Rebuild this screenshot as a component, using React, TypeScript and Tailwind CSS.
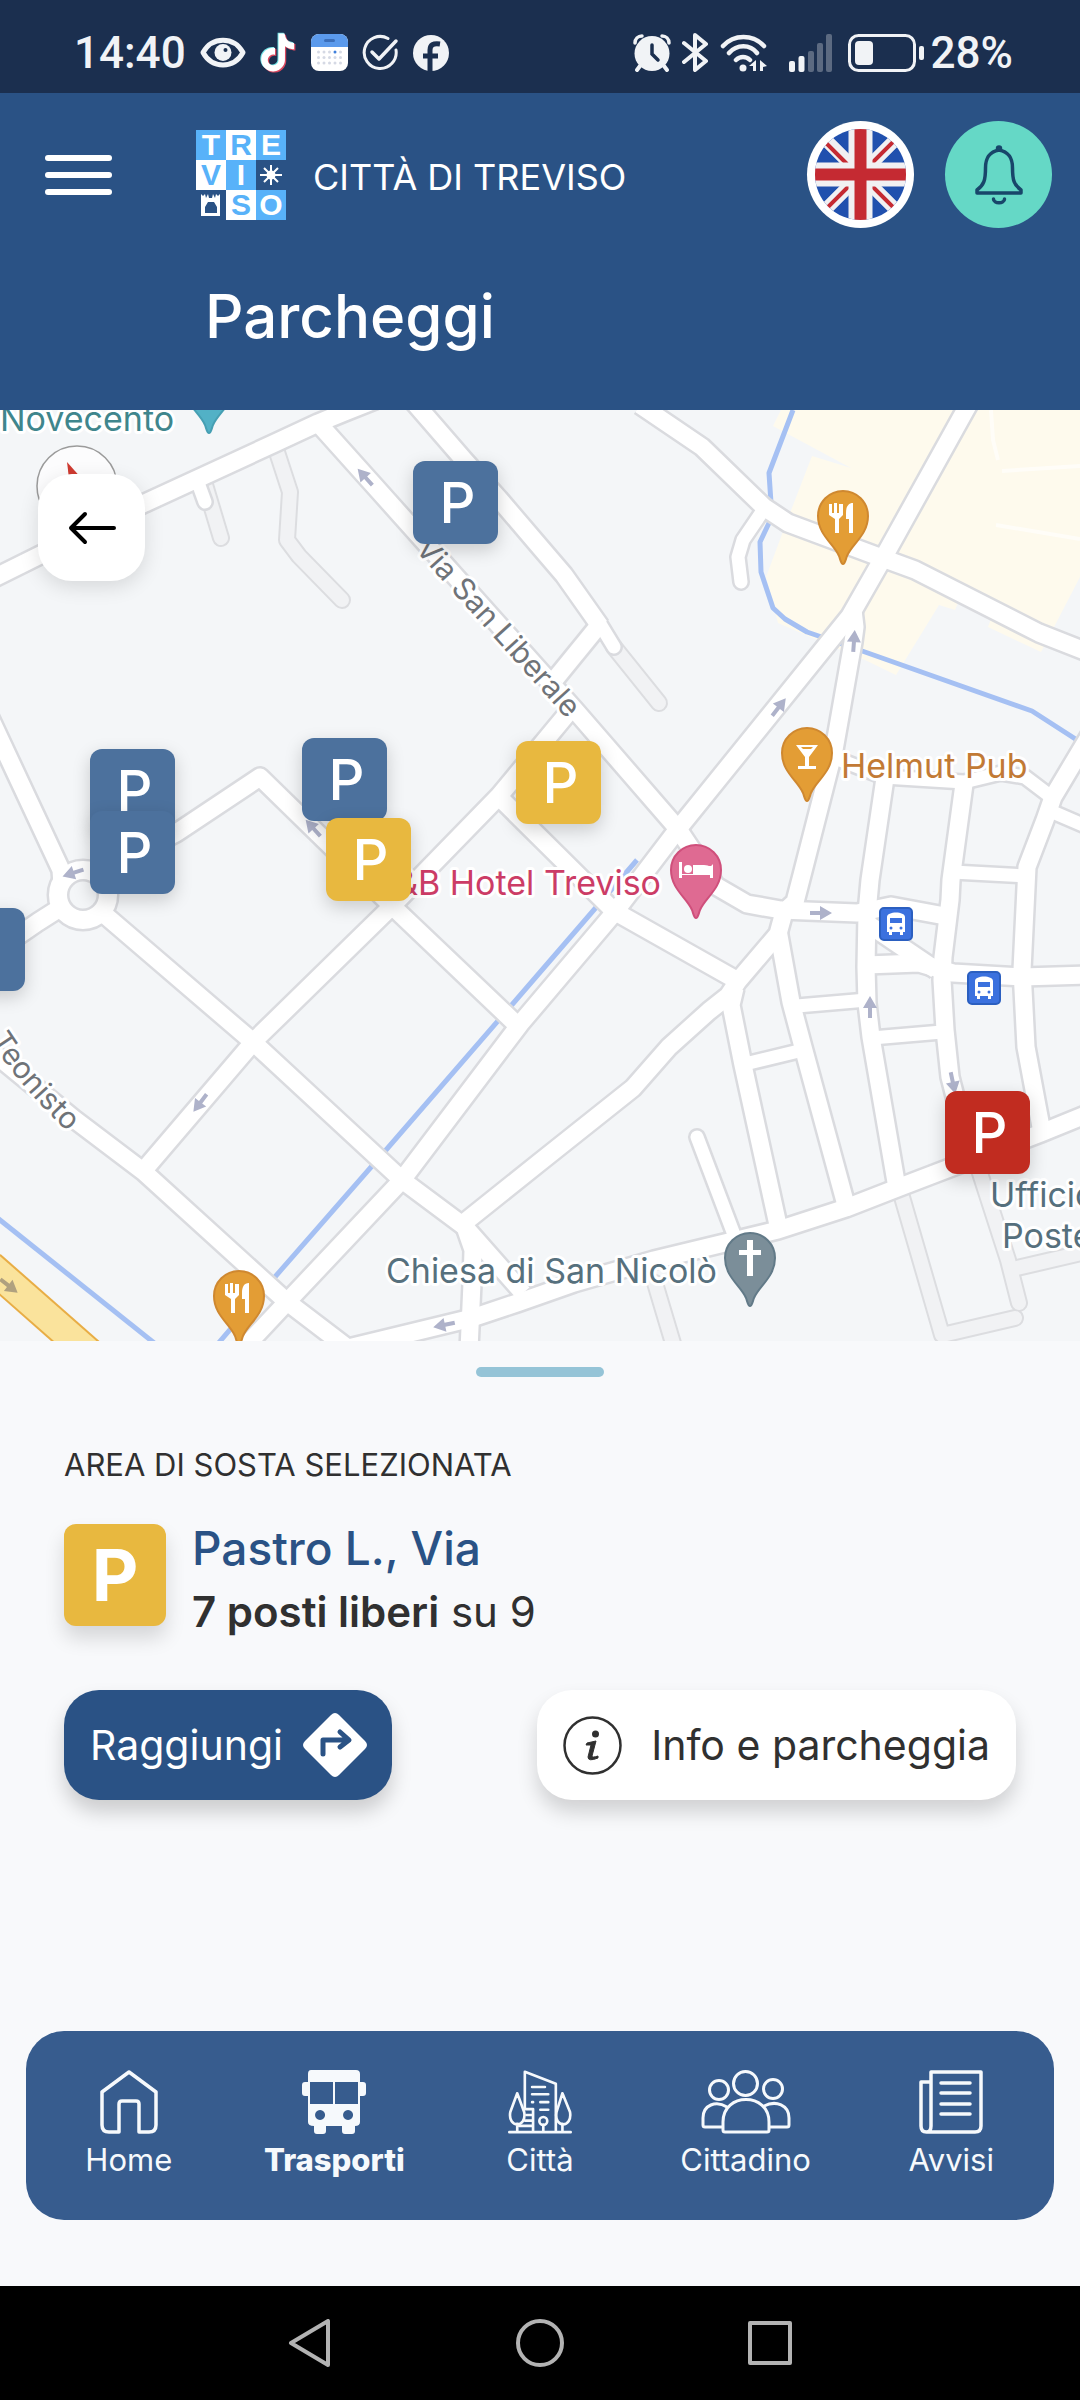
import React from 'react';

const MAP_W = 1080;
const MAP_H = 931;

const wideRoads = [
  'M-10 170 L145 93 L275 33 L318 13 L345 2 L375 -10',
  'M318 13 L379 81 L574 299 L678 419 L700 452 L716 476 L747 494 L781 500 L857 503 L891 496 L945 506',
  'M412 -10 L464 50 L499 89 L540 137 L564 165 L600 216',
  'M600 214 L556 268',
  'M572 298 L499 386 L391 497 L255 630 L144 760',
  'M499 387 L614 501 L738 571',
  'M971 -10 L886 143 L850 206 L678 419 L614 503 L520 614 L402 770 L286 893 L240 942',
  'M640 -5 L702 37 L764 97 L788 113 L874 145 L915 160 L1039 223 L1090 243',
  'M853 200 L855 217 L853 232 L834 340 L802 465 L795 492 L784 502 L778 524 L738 571 L728 586 L709 601 L669 637 L633 678 L540 752 L465 812',
  'M778 520 L791 592 L803 637 L846 795',
  'M735 578 L731 595 L743 655 L778 815',
  'M885 368 L870 470 L867 503 L866 557 L867 593 L871 627 L896 772',
  'M1090 325 L1053 387 L1045 410 L1027 457 L1022 560 L1026 637 L1041 717',
  'M964 374 L951 470 L950 490 L943 547 L942 570 L945 620 L950 667 L970 745',
  'M866 555 L919 553 L953 563 L1022 567 L1090 565',
  'M868 514 L936 560',
  'M1090 703 L1041 723 L900 777 L846 798 L778 820 L654 850 L574 873 L517 893 L472 908 L340 940',
  'M-10 308 L61 460 L62 475',
  'M-10 545 L38 512 L60 498',
  'M95 465 L176 423 L260 367 L391 495 L515 613',
  'M105 505 L253 632 L402 770 L465 817 L523 883',
  'M-10 640 L74 709 L144 762 L286 891 L345 936',
  'M465 817 L473 840 L472 873 L469 940',
];

const narrowRoads = [
  'M762 102 L743 130 L738 147 L741 172',
  'M840 350 L884 367 L964 372 L1001 363 L1025 367 L1050 386',
  'M1048 400 L1090 418',
  'M953 462 L1027 466',
  'M797 596 L867 590',
  'M745 654 L803 640',
  'M872 628 L942 622',
  'M697 727 L733 822',
  'M197 70 L205 92',
  'M600 214 L614 237',
];

const lanes = [
  'M203 68 L221 128',
  'M275 36 L290 82 L287 130 L299 146 L342 190',
  'M614 237 L659 293',
  'M902 787 L942 925 L1015 908',
  'M979 760 L1008 850 L1019 893',
  'M1017 858 L1090 841',
  'M655 873 L675 940',
];

const rivers = [
  'M793 0 L769 63 L771 93 L769 113 L760 132 L761 162 L773 198 L785 209 L807 222 L865 242 L1032 301 L1080 332',
  'M637 450 L510 597 L386 740 L274 868 L216 936',
  'M-5 806 L158 936',
];

const arrows = [
  { x: 365, y: 67, angle: -42 },
  { x: 313, y: 418, angle: -42 },
  { x: 73, y: 463, angle: -108 },
  { x: 200, y: 693, angle: -143 },
  { x: 779, y: 297, angle: 38 },
  { x: 854, y: 231, angle: 4 },
  { x: 821, y: 503, angle: 90 },
  { x: 870, y: 597, angle: 0 },
  { x: 953, y: 673, angle: 168 },
  { x: 444, y: 915, angle: -102 },
];

const spots = [
  { id: 1, x: 413, y: 51, color: 'bg-[#4c719d]' },
  { id: 2, x: 90, y: 339, color: 'bg-[#4c719d]' },
  { id: 3, x: 90, y: 401, color: 'bg-[#4c719d]' },
  { id: 4, x: 302, y: 328, color: 'bg-[#4c719d]' },
  { id: 5, x: 326, y: 408, color: 'bg-[#e8b83f]' },
  { id: 6, x: 516, y: 331, color: 'bg-[#e8b83f]' },
  { id: 7, x: -60, y: 498, color: 'bg-[#4c719d]' },
  { id: 8, x: 945, y: 681, color: 'bg-[#c12c20]' },
];

const TIKTOK = 'M12.525.02c1.31-.02 2.61-.01 3.91-.02.08 1.53.63 3.09 1.75 4.17 1.12 1.11 2.7 1.62 4.24 1.79v4.03c-1.44-.05-2.89-.35-4.2-.97-.57-.26-1.1-.59-1.62-.93-.01 2.92.01 5.84-.02 8.75-.08 1.4-.54 2.79-1.35 3.94-1.31 1.92-3.58 3.17-5.91 3.21-1.43.08-2.86-.31-4.08-1.03-2.02-1.19-3.44-3.37-3.65-5.71-.02-.5-.03-1-.01-1.49.18-1.9 1.12-3.72 2.58-4.96 1.66-1.44 3.98-2.13 6.15-1.72.02 1.48-.04 2.96-.04 4.44-.99-.32-2.15-.23-3.02.37-.63.41-1.11 1.04-1.36 1.75-.21.51-.15 1.07-.14 1.61.24 1.64 1.82 3.02 3.5 2.87 1.12-.01 2.19-.66 2.77-1.61.19-.33.4-.67.41-1.06.1-1.79.06-3.57.07-5.36.01-4.03-.01-8.05.02-12.07z';

function StatusBar() {
  return <div className="flex h-[93px] items-center justify-between bg-[#1b2f4f] pt-3 pr-[67px] pl-[74px] font-['Roboto',sans-serif] text-[44px] leading-none font-medium text-[#f1f3f6]">
      <div className="flex items-center gap-[14px]">
        <span>14:40</span>
        <svg className="h-[31px] w-[46px]" viewBox="0 0 46 31">
          <path d="M3 15.500C12 -1 34 -1 43 15.500C34 32 12 32 3 15.500Z" fill="none" stroke="currentColor" strokeWidth="5" strokeLinejoin="round" />
          <circle cx="23" cy="15.500" r="8.500" fill="currentColor" />
          <circle cx="25.500" cy="13" r="2" fill="#1b2f4f" />
        </svg>
        <svg className="h-[41px] w-[37px]" viewBox="1 -1 23 26">
          <path d={TIKTOK} fill="#6fe3e6" transform="translate(-.6 -.5)" />
          <path d={TIKTOK} fill="#d9485f" transform="translate(.8 .7)" />
          <path d={TIKTOK} fill="#fff" />
        </svg>
        <svg className="h-[37px] w-[37px]" viewBox="0 0 37 37">
          <rect width="37" height="37" rx="8" fill="#fff" />
          <path d="M0 13V8a8 8 0 0 1 8-8h21a8 8 0 0 1 8 8v5Z" fill="#5b9aec" />
          <rect x="13" y="5" width="11" height="3" rx="1.500" fill="#3c6fba" />
          {[18, 23.5, 29].map((y) => [7.5, 13, 18.5, 24, 29.5].map((x) => <circle key={`${x}-${y}`} cx={x} cy={y} r="1.500" fill={x === 24 && y === 18 ? '#3f7fdc' : '#d5d9e4'} />))}
        </svg>
        <svg className="h-[37px] w-[37px]" viewBox="0 0 37 37" fill="none" stroke="currentColor" strokeWidth="3" strokeLinecap="round" strokeLinejoin="round">
          <path d="M26 4.500A16 16 0 1 0 34 16" />
          <path d="M10 18l7 7L34 7" strokeWidth="3.500" />
        </svg>
        <svg className="h-[36px] w-[36px]" viewBox="0 0 36 36">
          <circle cx="18" cy="18" r="18" fill="currentColor" />
          <path d="M17 37V15c0-5 3-7 10-6M10 21h15" fill="none" stroke="#1b2f4f" strokeWidth="5" />
        </svg>
      </div>
      <div className="flex items-center gap-[7px]">
        <svg className="h-[38px] w-[38px]" viewBox="0 0 38 38" fill="none" stroke="currentColor" strokeLinecap="round">
          <circle cx="19" cy="19.500" r="17.500" fill="currentColor" stroke="none" />
          <path d="M2 9C2 5 5 2 9 2M36 9C36 5 33 2 29 2" strokeWidth="3.500" />
          <path d="M7 32l-3 4M31 32l3 4" strokeWidth="4" />
          <path d="M19 11v9l6 6" stroke="#1b2f4f" strokeWidth="3.500" />
        </svg>
        <svg className="mx-1 h-[39px] w-[27px]" viewBox="0 0 27 39" fill="none" stroke="currentColor" strokeWidth="4" strokeLinecap="round" strokeLinejoin="round">
          <path d="M2 10L24 28L13 37V2L24 11L2 29" />
        </svg>
        <svg className="h-[38px] w-[48px]" viewBox="0 0 48 38" fill="none" stroke="currentColor" strokeWidth="4.500" strokeLinecap="round">
          <path d="M3 12C14 0 33 0 44 12M9 19C17 10 30 10 37 19M16 26C20 22 26 22 30 26" />
          <circle cx="23" cy="34" r="3.500" fill="currentColor" stroke="none" />
          <path d="M36 26v11h-3v-5h-4zM40 37V26l7 6-4 1v4z" fill="currentColor" stroke="none" />
        </svg>
        <svg className="mr-[8px] ml-[14px] h-[38px] w-[44px]" viewBox="0 0 44 38" fill="currentColor">
          <rect x="0" y="27" width="6" height="11" rx="2" />
          <rect x="9.500" y="22" width="6" height="16" rx="2" />
          <g opacity=".3">
            <rect x="19" y="17" width="6" height="21" rx="2" />
            <rect x="28" y="9" width="6" height="29" rx="2" />
            <rect x="37" y="0" width="6" height="38" rx="2" />
          </g>
        </svg>
        <svg className="h-[38px] w-[76px]" viewBox="0 0 76 38">
          <rect x="1.500" y="1.500" width="65" height="35" rx="9" fill="none" stroke="currentColor" strokeWidth="3" />
          <rect x="7" y="7" width="18" height="24" rx="4" fill="currentColor" />
          <rect x="71" y="12" width="5" height="14" rx="2" fill="currentColor" />
        </svg>
        <span>28%</span>
      </div>
    </div>;
}

function TrevisoLogo() {
  const blue = 'flex items-center justify-center bg-[#58b2f9] text-white';
  const white = 'flex items-center justify-center bg-white text-[#58b2f9]';
  return <div className="grid h-[90px] w-[90px] grid-cols-3 grid-rows-3 font-['Liberation_Sans',sans-serif] text-[30px] leading-none font-bold">
      <span className={blue}>T</span>
      <span className={white}>R</span>
      <span className={blue}>E</span>
      <span className={white}>V</span>
      <span className={blue}>I</span>
      <svg viewBox="0 0 30 30" stroke="#fff" strokeWidth="2">
        <path d="M15 5v20M4 15h22M8 8l14 14M22 8L8 22" />
        <circle cx="15" cy="15" r="4.500" fill="#fff" stroke="none" />
      </svg>
      <svg viewBox="0 0 30 30">
        <path d="M5 26V4l2 2 2-2 1 4 2-4 1 4h3l1-4 2 4 1-4 2 2 2-2v22Z" fill="#fff" />
        <path d="M9 23v-6l3-5h6l3 5v6Z" fill="#2a5285" />
      </svg>
      <span className={white}>S</span>
      <span className={blue}>O</span>
    </div>;
}

function Header() {
  return <header className="bg-[#2a5285] pb-[62px] text-white">
      <div className="flex items-center pt-7 pr-7 pl-[45px]">
        <button aria-label="Menu" className="flex w-[67px] flex-col gap-[11px]">
          <span className="h-[6px] rounded-full bg-white"></span>
          <span className="h-[6px] rounded-full bg-white"></span>
          <span className="h-[6px] rounded-full bg-white"></span>
        </button>
        <div className="ml-[84px] flex items-center gap-[27px]">
          <TrevisoLogo />
          <span className="pt-1 text-[36px] leading-none">CITTÀ DI TREVISO</span>
        </div>
        <div className="ml-auto flex gap-[31px]">
          <button aria-label="English" className="h-[107px] w-[107px] overflow-hidden rounded-full bg-white">
            <svg viewBox="0 0 107 107">
              <clipPath id="flag"><circle cx="53.500" cy="53.500" r="45.500" /></clipPath>
              <g clipPath="url(#flag)">
                <path fill="#2050ae" d="M0 0h107v107H0z" />
                <path stroke="#f1f0f2" strokeWidth="13" d="M8 8l91 91M99 8L8 99" />
                <path stroke="#c52a32" strokeWidth="4" d="M8 11l40 40M99 8L59 48M8 99l40-40M59 59l40 40" />
                <path stroke="#f1f0f2" strokeWidth="24" d="M53.500 0v107M0 53.500h107" />
                <path stroke="#c52a32" strokeWidth="12" d="M53.500 0v107M0 53.500h107" />
              </g>
            </svg>
          </button>
          <button aria-label="Notifiche" className="flex h-[107px] w-[107px] items-center justify-center rounded-full bg-[#65d8c6]">
            <svg className="h-[60px] w-[50px]" viewBox="0 0 50 60" fill="none" stroke="#18466a" strokeWidth="3.500" strokeLinecap="round" strokeLinejoin="round">
              <path d="M25 5C15 7 11.500 13 11.500 23C11.500 35 10 40 3 45V48H47V45C40 40 38.500 35 38.500 23C38.500 13 35 7 25 5Z" />
              <circle cx="25" cy="3.500" r="1.500" />
              <path d="M19.500 54c0 5 11 5 11 0" />
            </svg>
          </button>
        </div>
      </div>
      <h1 className="mt-14 pl-[205px] text-[60px] leading-[64px] font-medium">Parcheggi</h1>
    </header>;
}

function Pin({ x, y, fill, stroke, children }: { x: number; y: number; fill: string; stroke: string; children?: React.ReactNode }) {
  return <g transform={`translate(${x} ${y})`}>
      <path d="M0 48C-2 48 -2.500 44 -4 40C-9 28 -25 19 -25 0A25 25 0 0 1 25 0C25 19 9 28 4 40C2.500 44 2 48 0 48Z" fill={fill} stroke={stroke} strokeWidth="2" />
      {children}
    </g>;
}

function Cutlery() {
  return <g fill="#fff">
      <path d="M-14 -12h3v9h2v-10h3v10h2v-9h4v11l-4 4V17h-4V3l-6-4Z" />
      <path d="M10 -13V17H6V3H3V-3C3 -9 5 -13 10 -13Z" />
    </g>;
}

function BusStop({ x, y }: { x: number; y: number }) {
  return <g transform={`translate(${x} ${y})`}>
      <rect x="-16" y="-16" width="32" height="32" rx="4" fill="#3b71de" stroke="#2b5fc0" strokeWidth="2" />
      <path d="M-9 8V-7C-9 -13 9 -13 9 -7V8H7V11H4V8H-4V11H-7V8Z" fill="#fff" />
      <path d="M-6 -6H6V-1H-6Z" fill="#3b71de" />
      <circle cx="-5" cy="4" r="1.500" fill="#3b71de" />
      <circle cx="5" cy="4" r="1.500" fill="#3b71de" />
    </g>;
}

function CityMap() {
  return <svg className="block h-full w-full font-['Inter',sans-serif]" viewBox={`0 0 ${MAP_W} ${MAP_H}`} preserveAspectRatio="xMidYMid slice">
      <rect width={MAP_W} height={MAP_H} fill="#f4f6f8" />
      <path fill="#fefaed" d="M781 0L773 16L851 58L812 46L790 103L766 167L778 213L822 232L865 250L896 265L939 195L955 200L960 188L998 190L988 217L1041 242L1080 167V0Z" />
      <path fill="none" stroke="#fff" strokeOpacity=".6" strokeWidth="4" d="M991 0l2 30 5 20M1002 61L1080 56M996 115L1080 129" />
      <g fill="none" strokeLinejoin="round">
        {rivers.map((d) => <path key={d} d={d} stroke="#a5c0f3" strokeWidth="5" />)}
        <path d="M-10 856L90 944" stroke="#e8ad45" strokeWidth="32" />
        <path d="M-10 856L90 944" stroke="#fae39c" strokeWidth="28" />
        {lanes.map((d) => <path key={d} d={d} stroke="#dcdde0" strokeWidth="18" strokeLinecap="round" />)}
        {lanes.map((d) => <path key={d} d={d} stroke="#f1f2f4" strokeWidth="14" strokeLinecap="round" />)}
        {narrowRoads.map((d) => <path key={d} d={d} stroke="#dadbdf" strokeWidth="18" strokeLinecap="round" />)}
        {wideRoads.map((d) => <path key={d} d={d} stroke="#dadbdf" strokeWidth="22" />)}
        <circle cx="83" cy="485" r="25" stroke="#dadbdf" strokeWidth="23" />
        {narrowRoads.map((d) => <path key={d} d={d} stroke="#fff" strokeWidth="13" strokeLinecap="round" />)}
        {wideRoads.map((d) => <path key={d} d={d} stroke="#fff" strokeWidth="17" />)}
        <circle cx="83" cy="485" r="25" stroke="#fff" strokeWidth="18" />
      </g>
      {arrows.map((a) => <path key={`${a.x}-${a.y}`} transform={`translate(${a.x} ${a.y}) rotate(${a.angle})`} d="M0-11L7 1H2V11H-2V1H-7Z" fill="#aeb2ca" />)}
      <path transform="translate(9 876) rotate(128)" d="M0-11L7 1H2V11H-2V1H-7Z" fill="#b0a17f" />

      <g className="text-[34px]" stroke="#fff" strokeWidth="6" strokeLinejoin="round" paintOrder="stroke">
        <text x="0" y="21" fill="#3f868d">Novecento</text>
        <text x="841" y="368" fill="#c27a35">Helmut Pub</text>
        <text x="661" y="485" textAnchor="end" fill="#cc3c66">B&amp;B Hotel Treviso</text>
        <text x="717" y="873" textAnchor="end" fill="#56707d">Chiesa di San Nicolò</text>
        <text x="990" y="797" fill="#56707d">Ufficio</text>
        <text x="1002" y="838" fill="#56707d">Poste</text>
        <text className="text-[30px]" transform="translate(499 217) rotate(48)" y="11" textAnchor="middle" fill="#6f7378">Via San Liberale</text>
        <path id="teonisto" d="M-34 584Q-8 650 68 722" fill="none" stroke="none" />
        <text className="text-[30px]" fill="#6f7378" textAnchor="end">
          <textPath href="#teonisto" startOffset="100%">Teonisto</textPath>
        </text>
      </g>

      <Pin x={209} y={-25} fill="#52b1c6" stroke="#469fb3" />
      <Pin x={843} y={106} fill="#e39d35" stroke="#cf8830"><Cutlery /></Pin>
      <Pin x={239} y={886} fill="#e39d35" stroke="#cf8830"><Cutlery /></Pin>
      <Pin x={807} y={343} fill="#e39d35" stroke="#cf8830">
        <path d="M-11 -8H11L2 4V13H9V16H-9V13H-2V4ZM-6 -6L-4 -4H4L6 -6Z" fill="#fff" fillRule="evenodd" />
      </Pin>
      <Pin x={696} y={460} fill="#df6a92" stroke="#cf4f7b">
        <path d="M-17 -8H-14V4H-3V-5H8C13 -5 14 -2 17 -6V8H14V5H-14V8H-17Z" fill="#fff" />
        <circle cx="-8" cy="-1" r="4" fill="#fff" />
      </Pin>
      <Pin x={750} y={848} fill="#7b8e99" stroke="#627a88">
        <path d="M-3 -18H3V-8H11V-3H3V18H-3V-3H-11V-8H-3Z" fill="#fff" />
      </Pin>
      <BusStop x={896} y={514} />
      <BusStop x={984} y={578} />
      <circle cx="77" cy="76" r="40" fill="#fcfcfd" stroke="#9b9b9b" strokeWidth="1.500" />
      <path d="M67 52L71 85L90 78Z" fill="#cf3a30" />
    </svg>;
}

function MapPanel() {
  return <section aria-label="Mappa parcheggi" className="relative aspect-[1080/931] w-full overflow-hidden">
      <CityMap />
      {spots.map((spot) => <button key={spot.id} aria-label="Parcheggio" className={`absolute flex h-[83px] w-[85px] items-center justify-center rounded-[12px] pl-1 text-[56px] leading-none font-medium text-white shadow-[0_6px_18px_rgba(0,0,0,0.18)] ${spot.color}`} style={{
      left: `${spot.x / MAP_W * 100}%`,
      top: `${spot.y / MAP_H * 100}%`
    }}>
          P
        </button>)}
      <button aria-label="Indietro" className="absolute top-[64px] left-[38px] flex h-[107px] w-[107px] items-center justify-center rounded-[34px] bg-white shadow-[0_6px_20px_rgba(0,0,0,0.12)]">
        <svg className="h-[34px] w-[48px]" viewBox="0 0 48 34" fill="none" stroke="#000" strokeWidth="4" strokeLinecap="round" strokeLinejoin="round">
          <path d="M46 17H3M17 3L3 17l14 14" />
        </svg>
      </button>
    </section>;
}

function SelectedArea() {
  return <section className="px-16 pt-[26px]">
      <div className="mx-auto h-[10px] w-[128px] rounded-full bg-[#95c4d7]"></div>
      <h2 className="mt-[70px] text-[31px] leading-[36px] text-[#303030]">AREA DI SOSTA SELEZIONATA</h2>
      <div className="mt-[41px] flex gap-[26px]">
        <div className="flex h-[102px] w-[102px] items-center justify-center rounded-[12px] bg-[#e8b83f] text-[72px] leading-none font-bold text-white shadow-[0_12px_20px_rgba(0,0,0,0.14)]">P</div>
        <div>
          <h3 className="text-[46px] leading-[48px] font-medium text-[#2a5285]">Pastro L., Via</h3>
          <p className="mt-4 text-[42px] leading-[48px] text-[#303030]">
            <strong className="font-semibold">7 posti liberi</strong> su 9
          </p>
        </div>
      </div>
      <div className="mt-[54px] flex justify-between text-[41px] leading-none">
        <button className="flex h-[110px] items-center gap-[19px] rounded-[35px] bg-[#2a5285] pr-[24px] pl-[26px] text-white shadow-[0_12px_20px_rgba(0,0,0,0.18)]">
          Raggiungi
          <svg className="h-[66px] w-[66px]" viewBox="0 0 66 66">
            <path d="M29 3Q33 -1 37 3L63 29Q67 33 63 37L37 63Q33 67 29 63L3 37Q-1 33 3 29Z" fill="#fff" />
            <path d="M21 42V28H46M38 20l9 8-9 7" fill="none" stroke="#2a5285" strokeWidth="5" strokeLinecap="round" strokeLinejoin="round" />
          </svg>
        </button>
        <button className="flex h-[110px] items-center gap-[29px] rounded-[35px] bg-white px-[26px] text-[#303030] shadow-[0_12px_20px_rgba(0,0,0,0.16)]">
          <svg className="h-[59px] w-[59px]" viewBox="0 0 59 59">
            <circle cx="29.500" cy="29.500" r="28" fill="none" stroke="#303030" strokeWidth="2.500" />
            <circle cx="32.500" cy="18" r="3.500" fill="#303030" />
            <path d="M24 27L33 25L29 40Q29 42 35 40V42Q25 46 25 41L28 29H23Z" fill="#303030" stroke="#303030" strokeLinejoin="round" />
          </svg>
          Info e parcheggia
        </button>
      </div>
    </section>;
}

const line = { fill: 'none', stroke: 'currentColor', strokeLinecap: 'round', strokeLinejoin: 'round' } as const;

const tabs = [{
  label: 'Home',
  icon: <svg className="h-16 w-[58px]" viewBox="0 0 58 64" {...line} strokeWidth="3.500">
      <path d="M2 22L29 2L56 22V55Q56 62 49 62H39V34Q39 31 36 31H22Q19 31 19 34V62H9Q2 62 2 55Z" />
    </svg>
}, {
  label: 'Trasporti',
  active: true,
  icon: <svg className="h-16 w-16" viewBox="0 0 64 64" fill="currentColor">
      <path fillRule="evenodd" d="M9 0H54Q58 0 58 4V12H61Q64 12 64 15V23Q64 26 61 26H58V52Q58 56 53 56V61Q53 64 50 64H43Q40 64 40 61V56H24V61Q24 64 21 64H15Q12 64 12 61V56Q6 56 6 52V26H3Q0 26 0 23V15Q0 12 3 12H6V4Q6 0 9 0ZM8 12V34H31V12ZM33 12V34H56V12ZM18 40a5 5 0 1 0 .1 0ZM46 40a5 5 0 1 0 .1 0Z" />
    </svg>
}, {
  label: 'Città',
  icon: <svg className="h-16 w-16" viewBox="26 29 194 193" {...line} strokeWidth="8">
      <path d="M77 144V34L171 70V213M30 217H216" />
      <path d="M99 80H138M99 102H148M99 126H102M124 126H148M124 149H148M78 147H102V213M82 165H102M78 182H102M60 198H102" />
      <path d="M54 99L33 156C24 206 84 206 75 156ZM191 99L173 156C164 206 222 206 214 156ZM54 192V215M191 192V215M133 195V215" />
      <circle cx="133" cy="183" r="12" />
    </svg>
}, {
  label: 'Cittadino',
  icon: <svg className="h-16 w-[90px]" viewBox="0 0 90 64" {...line} strokeWidth="3">
      <circle cx="44.500" cy="13.500" r="12" />
      <circle cx="18" cy="20" r="9.500" />
      <circle cx="72" cy="19" r="9.500" />
      <path d="M22 60V52C22 22 68 22 68 52V60Q68 62 66 62H24Q22 62 22 60Z" />
      <path d="M21 57H4Q2 57 2 55V48C2 35 15 30 26 37M69 57H86Q88 57 88 55V48C88 35 75 30 63 36" />
    </svg>
}, {
  label: 'Avvisi',
  icon: <svg className="h-16 w-16" viewBox="0 0 64 64" {...line} strokeWidth="3.500">
      <path d="M12 12H2V56Q2 62 7.500 62H56Q62 62 62 56V2H12V56Q12 62 7.500 62M22 13H51M22 23H51M22 34H51M22 44H51" />
    </svg>
}];

function TabBar() {
  return <nav className="mx-[26px] mt-auto mb-[66px] grid h-[189px] grid-cols-5 rounded-[38px] bg-[#375c8e] pt-[39px] text-[31px] leading-[34px] text-[#f6f9fc]">
      {tabs.map((tab) => <a key={tab.label} href="#" className="flex flex-col items-center gap-[9px]">
          {tab.icon}
          <span className={tab.active ? 'font-extrabold' : 'font-normal'}>{tab.label}</span>
        </a>)}
    </nav>;
}

function AndroidNav() {
  return <div className="flex h-[114px] items-center justify-center gap-[182px] bg-black text-[#b3b3b3]">
      <button aria-label="Back">
        <svg className="h-12 w-12" viewBox="0 0 48 48" {...line} strokeWidth="4"><path d="M42 2V46L5 24Z" /></svg>
      </button>
      <button aria-label="Home">
        <svg className="h-12 w-12" viewBox="0 0 48 48" {...line} strokeWidth="4"><circle cx="24" cy="24" r="22" /></svg>
      </button>
      <button aria-label="Recents">
        <svg className="h-12 w-12" viewBox="0 0 48 48" {...line} strokeWidth="4"><path d="M4 4H44V44H4Z" /></svg>
      </button>
    </div>;
}

export default function App() {
  return <div className="flex min-h-screen flex-col bg-[#f8f9fb] font-['Inter',sans-serif]">
      <StatusBar />
      <Header />
      <MapPanel />
      <SelectedArea />
      <TabBar />
      <AndroidNav />
    </div>;
}
